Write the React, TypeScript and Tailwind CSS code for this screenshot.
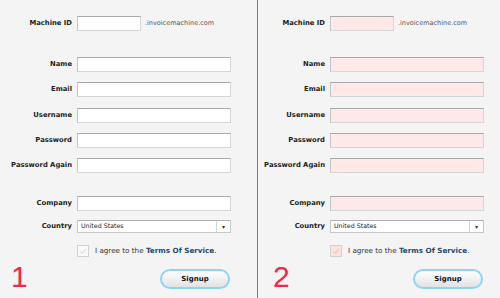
import React from 'react';

const fields = [
  { label: 'Name', mt: 'mt-[26px]' },
  { label: 'Email', mt: 'mt-[10px]' },
  { label: 'Username', mt: 'mt-[11px]' },
  { label: 'Password', mt: 'mt-[10px]' },
  { label: 'Password Again', mt: 'mt-[10px]' },
];

const font = { fontFamily: '"DejaVu Sans", Verdana, sans-serif' };

const Input = ({ pink, w }: { pink: boolean; w: string }) => (
  <div
    className={`${w} h-[15px] border border-[#d6d6d6] border-t-[#a9a9a9] border-l-[#c4c4c4] ${
      pink ? 'bg-[#ffe8e8]' : 'bg-white'
    }`}
  />
);

const Row = ({
  label,
  labelW,
  className,
  children,
}: {
  label?: string;
  labelW: string;
  className?: string;
  children: React.ReactNode;
}) => (
  <div className={`flex items-center gap-[5px] ${className ?? ''}`}>
    <div className={`${labelW} shrink-0 whitespace-nowrap text-right text-[6.8px] font-bold text-[#222]`}>
      {label}
    </div>
    {children}
  </div>
);

const Panel = ({ pink, labelW, num, numPad }: { pink: boolean; labelW: string; num: string; numPad: string }) => (
  <div className="flex flex-col pt-[16px]" style={font}>
    <Row label="Machine ID" labelW={labelW}>
      <Input pink={pink} w="w-[64px]" />
      <span className="ml-[-1px] whitespace-nowrap text-[6.5px] text-[#555]">.invoicemachine.com</span>
    </Row>
    {fields.map((f) => (
      <Row key={f.label} label={f.label} labelW={labelW} className={f.mt}>
        <Input pink={pink} w="w-[154px]" />
      </Row>
    ))}
    <Row label="Company" labelW={labelW} className="mt-[23px]">
      <Input pink={pink} w="w-[154px]" />
    </Row>
    <Row label="Country" labelW={labelW} className="mt-[9px]">
      <div className="flex h-[13px] w-[154px] items-center border border-[#c8c8c8] border-t-[#b0b0b0] bg-white">
        <span className="flex-1 pl-[3px] text-[6.3px] leading-none text-[#222]">United States</span>
        <span className="flex h-full w-[14px] items-center justify-center border-l border-[#d4d4d4] text-[6px] leading-none text-[#333]">
          ▾
        </span>
      </div>
    </Row>
    <Row labelW={labelW} className="mt-[12px]">
      <div
        className={`flex h-[12px] w-[12px] items-center justify-center border border-[#d2d2d2] ${
          pink ? 'bg-[#fde2e2]' : 'bg-[#fafafa]'
        }`}
      >
        <svg width="8" height="7" viewBox="0 0 8 7">
          <path d="M1 3.5 L3 5.5 L7 1" stroke={pink ? '#f3c4c4' : '#e2e2e2'} strokeWidth="1.2" fill="none" />
        </svg>
      </div>
      <span className="ml-[1px] whitespace-nowrap text-[7.2px] text-[#333]">
        I agree to the <span className="font-bold text-[#1d4a6e]">Terms Of Service</span>.
      </span>
    </Row>
    <div className="mt-[5px] flex items-center gap-[5px]">
      <div className={`${labelW} shrink-0 ${numPad}`}>
        <span
          className="text-[30px] leading-none text-[#f0284c]"
          style={{ fontFamily: '"Liberation Sans", Arial, sans-serif' }}
        >
          {num}
        </span>
      </div>
      <button className="ml-[83px] mt-[2px] flex h-[20px] w-[70px] items-center justify-center rounded-full border-2 border-[#8fd3f2] bg-gradient-to-b from-white to-[#e2e2e2] text-[7px] font-bold text-[#111]">
        Signup
      </button>
    </div>
  </div>
);

export default function App() {
  return (
    <div className="flex h-[298px] w-[500px] overflow-hidden bg-[#f4f4f4]">
      <div className="w-[257px] shrink-0">
        <Panel pink={false} labelW="w-[72px]" num="1" numPad="pl-[11px]" />
      </div>
      <div className="w-px shrink-0 bg-[#7a7a7a]" />
      <div className="flex-1">
        <Panel pink labelW="w-[67px]" num="2" numPad="pl-[15px]" />
      </div>
    </div>
  );
}
